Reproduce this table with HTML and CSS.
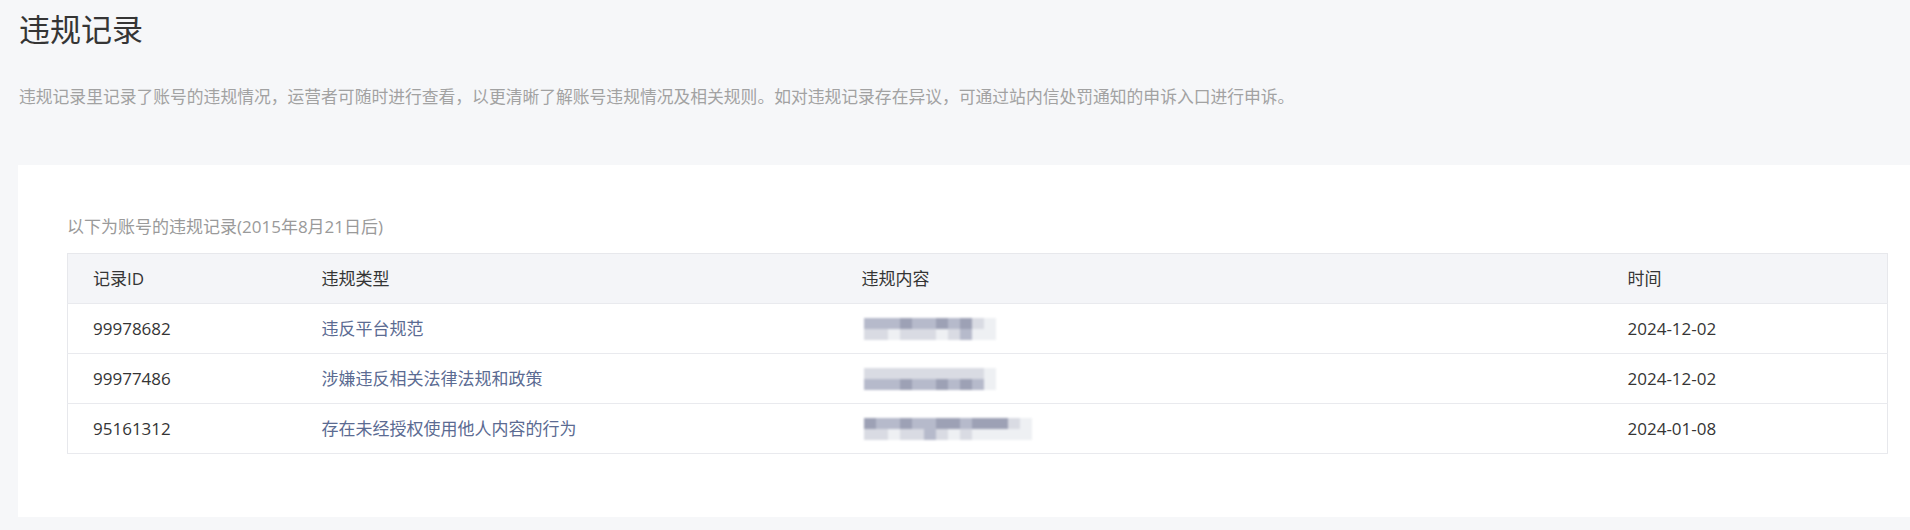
FILE: index.html
```html
<!DOCTYPE html>
<html lang="zh-CN">
<head>
<meta charset="utf-8">
<title>违规记录</title>
<link rel="stylesheet" href="styles.css">
</head>
<body>
<div class="page">
  <h1 class="title">违规记录</h1>
  <p class="desc">违规记录里记录了账号的违规情况，运营者可随时进行查看，以更清晰了解账号违规情况及相关规则。如对违规记录存在异议，可通过站内信处罚通知的申诉入口进行申诉。</p>
  <div class="card">
    <p class="caption">以下为账号的违规记录(2015年8月21日后)</p>
    <table class="records">
      <colgroup>
        <col class="c-id"><col class="c-type"><col class="c-content"><col class="c-time">
      </colgroup>
      <thead>
        <tr><th>记录ID</th><th>违规类型</th><th>违规内容</th><th>时间</th></tr>
      </thead>
      <tbody>
        <tr>
          <td>99978682</td>
          <td class="type">违反平台规范</td>
          <td>
            <div class="mosaic">
              <div class="mrow"><i class="m"></i><i class="m"></i><i class="m"></i><i class="d"></i><i class="m"></i><i class="m"></i><i class="d"></i><i class="m"></i><i class="d"></i><i class="l"></i><i class="v"></i></div>
              <div class="mrow"><i class="l"></i><i class="l"></i><i class="v"></i><i class="l"></i><i class="l"></i><i class="l"></i><i class="v"></i><i class="l"></i><i class="m"></i><i class="v"></i><i class="v"></i></div>
            </div>
          </td>
          <td>2024-12-02</td>
        </tr>
        <tr>
          <td>99977486</td>
          <td class="type">涉嫌违反相关法律法规和政策</td>
          <td>
            <div class="mosaic">
              <div class="mrow"><i class="l"></i><i class="l"></i><i class="l"></i><i class="l"></i><i class="l"></i><i class="l"></i><i class="l"></i><i class="l"></i><i class="l"></i><i class="l"></i><i class="v"></i></div>
              <div class="mrow"><i class="m"></i><i class="m"></i><i class="m"></i><i class="d"></i><i class="m"></i><i class="m"></i><i class="d"></i><i class="m"></i><i class="d"></i><i class="m"></i><i class="v"></i></div>
            </div>
          </td>
          <td>2024-12-02</td>
        </tr>
        <tr>
          <td>95161312</td>
          <td class="type">存在未经授权使用他人内容的行为</td>
          <td>
            <div class="mosaic">
              <div class="mrow"><i class="d"></i><i class="m"></i><i class="m"></i><i class="d"></i><i class="m"></i><i class="m"></i><i class="d"></i><i class="d"></i><i class="m"></i><i class="d"></i><i class="d"></i><i class="d"></i><i class="l"></i><i class="v"></i></div>
              <div class="mrow"><i class="l"></i><i class="l"></i><i class="v"></i><i class="l"></i><i class="l"></i><i class="m"></i><i class="l"></i><i class="v"></i><i class="l"></i><i class="v"></i><i class="v"></i><i class="v"></i><i class="v"></i><i class="v"></i></div>
            </div>
          </td>
          <td>2024-01-08</td>
        </tr>
      </tbody>
    </table>
  </div>
</div>
</body>
</html>
```

FILE: styles.css
```css
html, body {
  margin: 0;
  padding: 0;
  background: #f6f7f9;
  overflow: hidden;
}

body {
  font-family: "Open Sans", "Noto Sans CJK SC", sans-serif;
  color: #333;
}

.page {
  padding: 9px 0 14px 18px;
}

.title {
  margin: 0;
  font-size: 31px;
  line-height: 40px;
  font-weight: 400;
  color: #353535;
  padding-left: 1px;
}

.desc {
  margin: 36px 0 0;
  padding-left: 1px;
  font-size: 16.8px;
  line-height: 24px;
  color: #a2a2a2;
}

.card {
  margin-top: 56px;
  background: #fff;
  padding: 50px 22px 63px 49px;
}

.caption {
  margin: 0 0 14px;
  font-size: 17px;
  line-height: 24px;
  color: #9a9a9a;
}

.records {
  width: 100%;
  border-collapse: collapse;
  table-layout: fixed;
  border: 1px solid #e7e8ec;
  font-size: 17px;
}

.c-id { width: 229px; }
.c-type { width: 540px; }
.c-content { width: 766px; }
.c-time { width: auto; }

.records th,
.records td {
  height: 49px;
  padding: 0 0 0 25px;
  text-align: left;
  font-weight: 400;
  line-height: 24px;
  border-bottom: 1px solid #e9eaee;
  vertical-align: middle;
}

.records th {
  background: #f4f5f8;
  color: #353535;
}

.records td {
  color: #353535;
}

.records td.type {
  color: #5b6b92;
}

.mosaic {
  display: flex;
  flex-direction: column;
  margin-left: 2px;
  filter: blur(0.8px);
}

.mrow {
  display: flex;
}

.mrow i {
  display: block;
  width: 12px;
  height: 11px;
}

.mrow i.m { background: #b6bacb; }
.mrow i.d { background: #9da1b5; }
.mrow i.l { background: #d9dbe3; }
.mrow i.v { background: #eef0f3; }
```
